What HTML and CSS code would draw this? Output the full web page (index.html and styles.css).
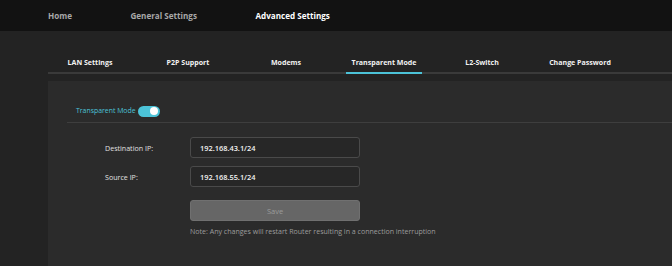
FILE: index.html
```html
<!DOCTYPE html>
<html>
<head>
<meta charset="utf-8">
<link rel="stylesheet" href="styles.css">
</head>
<body>
<header class="topnav">
  <a class="nav-item">Home</a>
  <a class="nav-item">General Settings</a>
  <a class="nav-item active">Advanced Settings</a>
</header>
<main class="content">
  <nav class="tabs">
    <div class="tab-list">
      <div class="tab"><span>LAN Settings</span></div>
      <div class="tab"><span>P2P Support</span></div>
      <div class="tab"><span>Modems</span></div>
      <div class="tab active"><span>Transparent Mode</span></div>
      <div class="tab"><span>L2-Switch</span></div>
      <div class="tab"><span>Change Password</span></div>
    </div>
  </nav>
  <section class="panel">
    <div class="mode-row">
      <span class="mode-label">Transparent Mode</span>
      <span class="toggle"><span class="knob"></span></span>
    </div>
    <div class="form">
      <div class="field">
        <label class="field-label">Destination IP:</label>
        <div class="input">192.168.43.1/24</div>
      </div>
      <div class="field">
        <label class="field-label">Source IP:</label>
        <div class="input">192.168.55.1/24</div>
      </div>
      <div class="actions">
        <button class="save">Save</button>
        <p class="note">Note: Any changes will restart Router resulting in a connection interruption</p>
      </div>
    </div>
  </section>
</main>
</body>
</html>
```
FILE: styles.css
```css
html, body {
  margin: 0;
  padding: 0;
  height: 100%;
}
body {
  background: #232323;
  font-family: "Open Sans", "Noto Sans", sans-serif;
  color: #e8e8e8;
  overflow: hidden;
}
.topnav {
  height: 31px;
  background: #121212;
  display: flex;
  align-items: center;
  padding-left: 48px;
  gap: 58.5px;
}
.nav-item {
  font-size: 8.1px;
  font-weight: 700;
  color: #a8a8a8;
  line-height: 1;
  padding-top: 1px;
}
.nav-item.active {
  color: #ffffff;
}
.content {
  padding-left: 48px;
}
.tabs {
  height: 43px;
  border-bottom: 2px solid #3a3a3a;
  box-sizing: border-box;
  margin-bottom: 7px;
  display: flex;
  align-items: flex-end;
}
.tab-list {
  display: grid;
  grid-template-columns: repeat(6, 98px);
  margin-left: -7px;
  margin-bottom: -2px;
}
.tab {
  display: flex;
  justify-content: center;
}
.tab span {
  font-size: 7.05px;
  font-weight: 700;
  color: #f2f2f2;
  padding: 0 6px 6px;
  line-height: 1;
  border-bottom: 2px solid transparent;
}
.tab.active span {
  border-bottom-color: #4cc3d8;
}
.panel {
  background: #2b2b2b;
  height: 185px;
  padding-left: 19px;
}
.mode-row {
  height: 42px;
  display: flex;
  align-items: center;
  padding: 22px 0 3px 9px;
  gap: 2px;
  border-bottom: 1px solid #3e3e3e;
  box-sizing: border-box;
}
.mode-label {
  font-size: 6.9px;
  color: #4cc3d8;
  line-height: 1;
}
.toggle {
  width: 22px;
  height: 11px;
  border-radius: 6px;
  background: #4cc3d8;
  position: relative;
  display: inline-block;
}
.knob {
  position: absolute;
  right: 2px;
  top: 1.5px;
  width: 8px;
  height: 8px;
  border-radius: 50%;
  background: #ffffff;
}
.form {
  padding-top: 14px;
  padding-left: 38px;
}
.field {
  display: flex;
  align-items: center;
  height: 21px;
  margin-bottom: 8px;
}
.field-label {
  width: 85px;
  font-size: 7.1px;
  color: #e0e0e0;
}
.input {
  width: 170px;
  height: 21px;
  box-sizing: border-box;
  border: 1px solid #4a4a4a;
  border-radius: 3px;
  background: #272727;
  font-size: 7.4px;
  font-weight: 600;
  color: #f4f4f4;
  padding-left: 9px;
  display: flex;
  align-items: center;
}
.actions {
  padding-left: 85px;
  padding-top: 5px;
}
.save {
  display: block;
  width: 170px;
  height: 21px;
  border: 1px solid #707070;
  border-radius: 3px;
  background: #666666;
  color: #9a9a9a;
  font-family: inherit;
  font-size: 7.5px;
  padding: 0;
}
.note {
  margin: 7px 0 0;
  font-size: 7.05px;
  color: #9c9c9c;
  line-height: 1;
}
```
